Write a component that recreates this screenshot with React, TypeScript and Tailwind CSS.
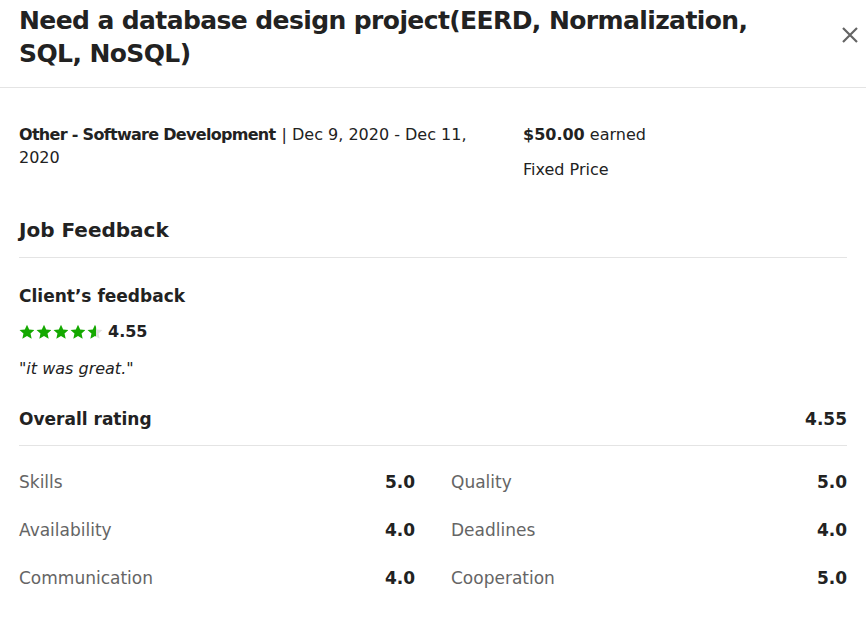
const Star = ({ fill = 1 }: { fill?: number }) => {
  const id = `s${Math.round(fill * 100)}`;
  return (
    <svg width="16" height="16" viewBox="0 0 24 24" className="shrink-0">
      <defs>
        <linearGradient id={id}>
          <stop offset={`${fill * 100}%`} stopColor="#14a800" />
          <stop offset={`${fill * 100}%`} stopColor="#e0e0e0" />
        </linearGradient>
      </defs>
      <path
        d="M12 1l3.3 7.2 7.9.8-5.9 5.3 1.7 7.8L12 18.1l-7 4 1.7-7.8L.8 9l7.9-.8z"
        fill={`url(#${id})`}
      />
    </svg>
  );
};

const Row = ({ label, value }: { label: string; value: string }) => (
  <div className="flex items-center justify-between h-12">
    <span className="text-[#656565]">{label}</span>
    <span className="font-bold text-[17px] text-[#222]">{value}</span>
  </div>
);

export default function App() {
  return (
    <div
      className="w-[866px] h-[620px] bg-white text-[#222] overflow-hidden"
      style={{ fontFamily: '"DejaVu Sans", sans-serif' }}
    >
      <div className="flex items-start justify-between pl-[19px] pr-[7px] pt-[4px] pb-[17px] border-b border-[#e4e4e4]">
        <h1 className="text-[25px] leading-[33px] font-bold max-w-[760px] tracking-[-0.6px]">
          Need a database design project(EERD, Normalization, SQL, NoSQL)
        </h1>
        <button className="mt-[22px] text-[#656565]">
          <svg width="18" height="18" viewBox="0 0 18 18">
            <path d="M2 2L16 16M16 2L2 16" stroke="currentColor" strokeWidth="2.2" />
          </svg>
        </button>
      </div>

      <div className="px-[19px]">
        <div className="flex pt-[35px] text-[16px] leading-[23px]">
          <div className="w-[504px] pr-[36px]">
            <span className="font-bold tracking-[-0.7px]">Other - Software Development</span>
            <span className="ml-[6px]">| Dec 9, 2020 - Dec 11, 2020</span>
          </div>
          <div className="flex flex-col gap-[12px]">
            <div>
              <span className="font-bold">$50.00</span> earned
            </div>
            <div>Fixed Price</div>
          </div>
        </div>

        <h2 className="mt-[34px] text-[20px] font-bold pb-[12px] border-b border-[#e4e4e4]">
          Job Feedback
        </h2>

        <h3 className="mt-[26px] text-[17px] font-bold">Client’s feedback</h3>
        <div className="flex items-center mt-[10px]">
          <div className="flex gap-[1px]">
            <Star />
            <Star />
            <Star />
            <Star />
            <Star fill={0.55} />
          </div>
          <span className="ml-[5px] font-bold text-[16px]">4.55</span>
        </div>
        <p className="italic text-[16px] mt-[13px]">"it was great."</p>

        <div className="flex justify-between items-center mt-[26px] pb-[13px] border-b border-[#e4e4e4] text-[17px] font-bold">
          <span>Overall rating</span>
          <span>4.55</span>
        </div>

        <div className="grid grid-cols-2 gap-x-[36px] mt-[13px] text-[17px]">
          <Row label="Skills" value="5.0" />
          <Row label="Quality" value="5.0" />
          <Row label="Availability" value="4.0" />
          <Row label="Deadlines" value="4.0" />
          <Row label="Communication" value="4.0" />
          <Row label="Cooperation" value="5.0" />
        </div>
      </div>
    </div>
  );
}
